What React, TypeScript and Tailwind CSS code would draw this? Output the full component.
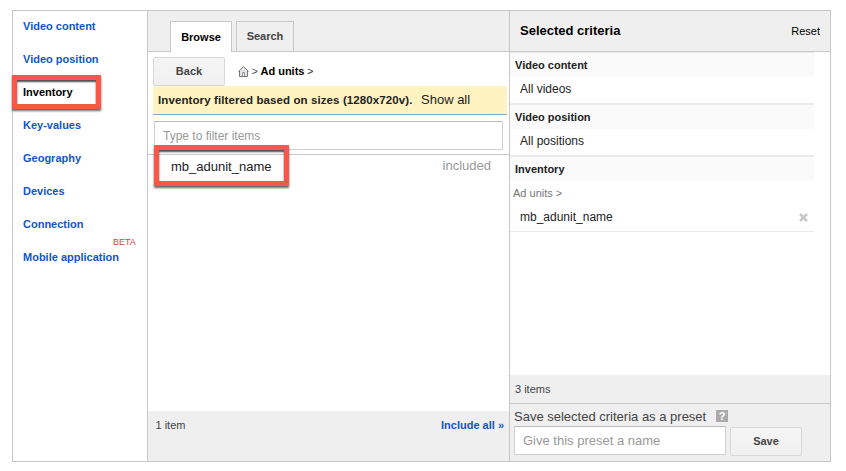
import React from "react";

const navItems = [
  { label: "Video content", cls: "" },
  { label: "Video position", cls: "" },
  { label: "Inventory", cls: "text-black" },
  { label: "Key-values", cls: "" },
  { label: "Geography", cls: "" },
  { label: "Devices", cls: "" },
  { label: "Connection", cls: "" },
  { label: "Mobile application", cls: "" },
];

function Sidebar() {
  return (
    <nav className="relative w-[135px] shrink-0 border-r border-[#c8c8c8] pl-[10px] text-[11px] font-bold text-[#1155cc]">
      {navItems.map((item) => (
        <div key={item.label} className={`h-[33px] leading-[31px] ${item.cls}`}>
          {item.label}
        </div>
      ))}
      <span className="absolute left-[100px] top-[225px] text-[9px] font-normal leading-[12px] text-[#dd3b45]">
        BETA
      </span>
      <div className="absolute left-[-1px] top-[64px] h-[34px] w-[89px] border-[5px] border-[#fb5748] shadow-[0_2px_2px_rgba(0,0,0,0.6),inset_0_2px_2px_rgba(0,0,0,0.7)]" />
    </nav>
  );
}

function HomeIcon() {
  return (
    <svg width="11" height="11" viewBox="0 0 11 11" fill="none" className="shrink-0">
      <path d="M1.5 5v5.500h8V5L5.500 1z" fill="#e6e6e6" />
      <path d="M0.500 5.500L5.500 0.700l5 4.800M1.500 5v5.500h8V5" stroke="#777" />
      <path d="M4.500 10V6.500h2V10" stroke="#999" />
    </svg>
  );
}

function Browser() {
  return (
    <section className="flex w-[362px] shrink-0 flex-col border-r border-[#c8c8c8]">
      <div className="flex h-[41px] shrink-0 gap-1 border-b border-[#c8c8c8] bg-[#efefef] pl-[22px] pt-[10px] text-[11px] font-bold">
        <div className="h-[31px] w-[62px] border border-b-0 border-[#c8c8c8] bg-white text-center leading-[31px] text-black">
          Browse
        </div>
        <div className="h-[30px] w-[58px] border border-b-0 border-[#c8c8c8] text-center leading-[29px] text-[#444]">
          Search
        </div>
      </div>
      <div className="flex h-[34px] shrink-0 items-start pl-[5px] pt-[5px]">
        <button className="h-[29px] w-[72px] rounded-[2px] border border-[#d8d8d8] bg-linear-to-b from-[#f5f5f5] to-[#f0f0f0] text-[11px] font-bold leading-[27px] text-[#444]">
          Back
        </button>
        <div className="ml-[13px] flex h-[28px] items-center gap-[2.500px] text-[11px] font-bold text-black">
          <HomeIcon />
          <span className="font-normal text-[#555]">&gt;</span>
          <span>Ad units</span>
          <span className="font-normal text-[#333]">&gt;</span>
        </div>
      </div>
      <div className="ml-[5px] flex h-[29px] w-[354px] shrink-0 items-center whitespace-nowrap border-b border-[#7faacb] bg-[#fff3c2] pl-[5px] text-[#222]">
        <span className="w-[263px] pt-[2px] text-[11.5px] font-bold tracking-[0.1px]">
          Inventory filtered based on sizes (1280x720v).
        </span>
        <span className="text-[13px]">Show all</span>
      </div>
      <div className="h-[40px] shrink-0 border-b border-[#c8c8c8] pl-[6px] pt-[6px]">
        <input
          placeholder="Type to filter items"
          className="block h-[29px] w-[349px] border border-[#d0d0d0] border-t-[#bbb] bg-white px-[8px] text-[12px] outline-none placeholder:text-[#999]"
        />
      </div>
      <div className="relative flex grow justify-between pl-[23px] pr-[18px]">
        <span className="mt-[3px] text-[13px] leading-[18px] text-[#222]">mb_adunit_name</span>
        <span className="mt-[2px] text-[13px] leading-[18px] text-[#999]">included</span>
        <div className="absolute left-[6px] top-[-10px] h-[41px] w-[135px] border-[5px] border-[#fb5748] shadow-[0_2px_2px_rgba(0,0,0,0.6),inset_0_2px_2px_rgba(0,0,0,0.7)]" />
      </div>
      <footer className="flex h-[50px] shrink-0 justify-between bg-[#efefef] pl-[7.500px] pr-[5px] text-[11px] leading-[29px] text-[#444]">
        <span>1 item</span>
        <span className="font-bold text-[#1155cc]">Include all »</span>
      </footer>
    </section>
  );
}

function GroupTitle({ children, first }: { children: React.ReactNode; first?: boolean }) {
  return (
    <h3
      className={`w-[304px] border-[#ebebeb] bg-[#fafafa] pl-[5px] text-[11px] font-bold leading-[24px] text-[#222] ${
        first ? "h-[25px] border-t" : "h-[26px] border-t-2"
      }`}
    >
      {children}
    </h3>
  );
}

function Criteria() {
  return (
    <section className="flex grow flex-col">
      <header className="flex h-[41px] shrink-0 justify-between border-b border-[#c8c8c8] bg-[#efefef] pl-[10px] pr-[10px] text-black">
        <h2 className="text-[13px] font-bold leading-[39px]">Selected criteria</h2>
        <span className="text-[11px] leading-[40px]">Reset</span>
      </header>
      <div className="grow text-[12px] text-[#222]">
        <GroupTitle first>Video content</GroupTitle>
        <div className="h-[26px] pl-[10px] leading-[24px]">All videos</div>
        <GroupTitle>Video position</GroupTitle>
        <div className="h-[26px] pl-[10px] leading-[24px]">All positions</div>
        <GroupTitle>Inventory</GroupTitle>
        <div className="h-[22px] pl-[3px] text-[11px] leading-[24px] text-[#777]">Ad units &gt;</div>
        <div className="flex h-[29px] w-[304px] items-center justify-between border-b border-[#ebebeb] pl-[10px] pr-[6px]">
          <span>mb_adunit_name</span>
          <svg width="9" height="9" viewBox="0 0 9 9">
            <path d="M1 1l7 7M8 1L1 8" stroke="#c8c8c8" strokeWidth="2.500" />
          </svg>
        </div>
      </div>
      <div className="h-[29px] shrink-0 border-b border-[#c8c8c8] bg-[#efefef] pl-[5px] text-[11px] leading-[29px] text-[#444]">
        3 items
      </div>
      <div className="h-[57px] shrink-0 bg-[#efefef] pl-[4px] text-[#444]">
        <div className="flex h-[22px] items-center pt-[3px] text-[13px]">
          <span className="whitespace-nowrap">Save selected criteria as a preset</span>
          <span className="ml-[10px] mt-[-1px] flex size-[12px] items-center justify-center bg-[#aaa] text-[11px] font-bold leading-none text-white">
            ?
          </span>
        </div>
        <div className="flex gap-1">
          <input
            placeholder="Give this preset a name"
            className="block h-[29px] w-[212px] border border-[#d0d0d0] border-t-[#bbb] bg-white px-[8px] text-[13px] outline-none placeholder:text-[#999]"
          />
          <button className="mt-[1px] h-[29px] w-[72px] rounded-[2px] border border-[#d8d8d8] bg-linear-to-b from-[#f5f5f5] to-[#f0f0f0] text-[11px] font-bold leading-[27px] text-[#444]">
            Save
          </button>
        </div>
      </div>
    </section>
  );
}

export default function App() {
  return (
    <div className="h-[471px] w-[846px] overflow-hidden bg-white pl-[12px] pt-[10px] font-['Liberation_Sans',Arial,sans-serif]">
      <main className="flex h-[452px] w-[819px] border border-[#c8c8c8]">
        <Sidebar />
        <Browser />
        <Criteria />
      </main>
    </div>
  );
}
